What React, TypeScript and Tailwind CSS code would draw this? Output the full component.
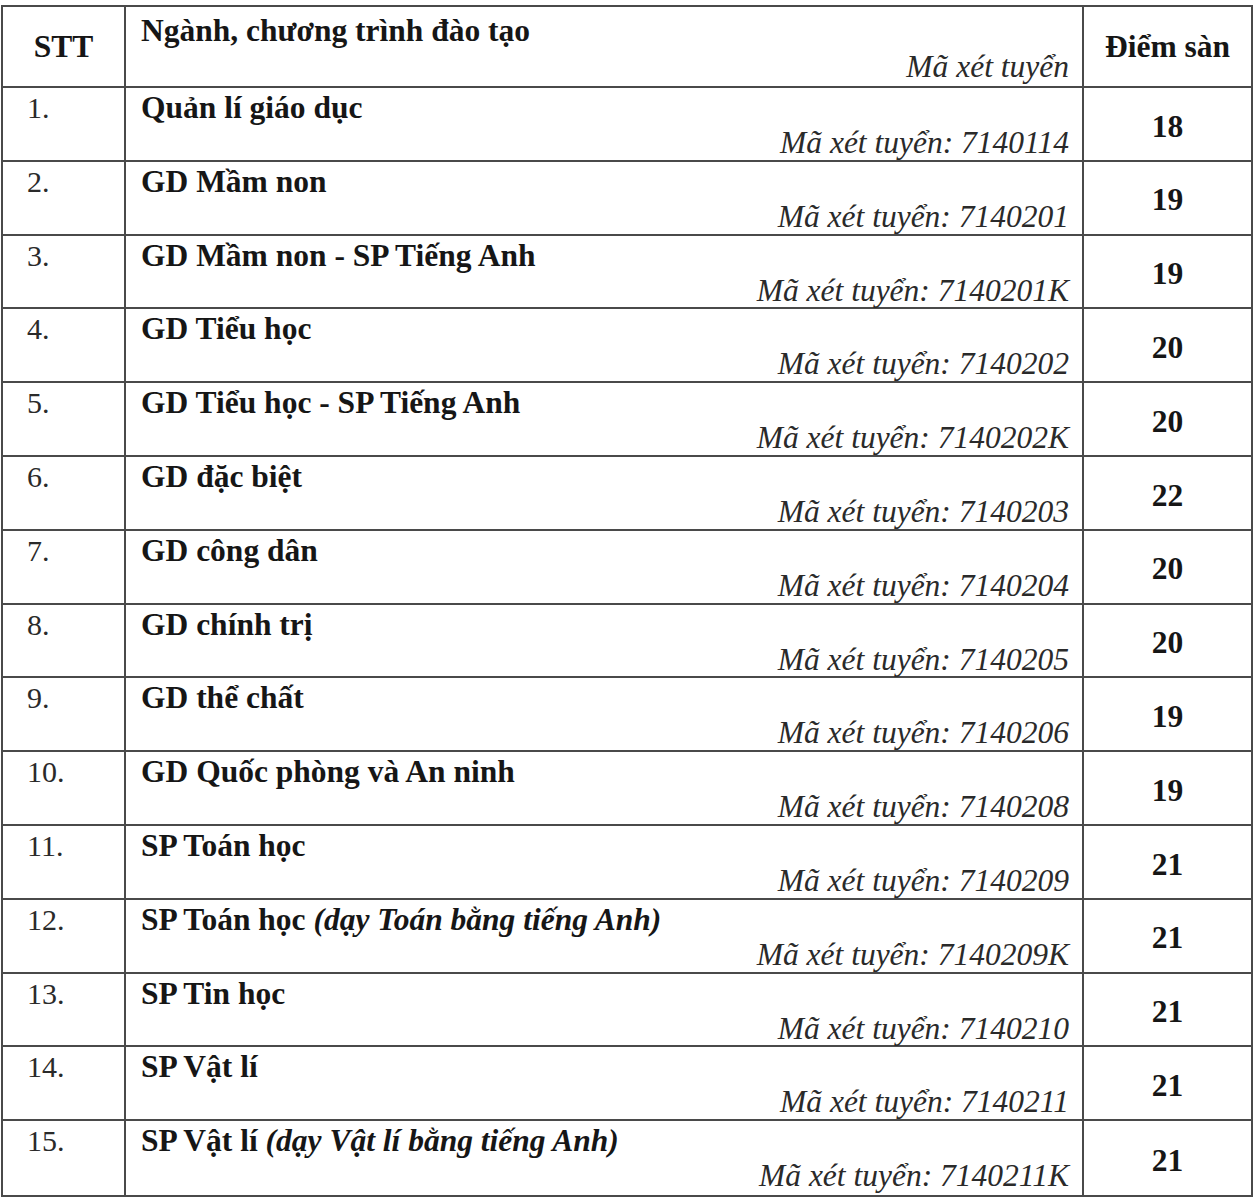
import React from 'react';

type Row = {
  stt: string;
  name: string;
  note?: string;
  code: string;
  score: string;
};

const rows: Row[] = [
  { stt: '1.', name: 'Quản lí giáo dục', code: '7140114', score: '18' },
  { stt: '2.', name: 'GD Mầm non', code: '7140201', score: '19' },
  { stt: '3.', name: 'GD Mầm non - SP Tiếng Anh', code: '7140201K', score: '19' },
  { stt: '4.', name: 'GD Tiểu học', code: '7140202', score: '20' },
  { stt: '5.', name: 'GD Tiểu học - SP Tiếng Anh', code: '7140202K', score: '20' },
  { stt: '6.', name: 'GD đặc biệt', code: '7140203', score: '22' },
  { stt: '7.', name: 'GD công dân', code: '7140204', score: '20' },
  { stt: '8.', name: 'GD chính trị', code: '7140205', score: '20' },
  { stt: '9.', name: 'GD thể chất', code: '7140206', score: '19' },
  { stt: '10.', name: 'GD Quốc phòng và An ninh', code: '7140208', score: '19' },
  { stt: '11.', name: 'SP Toán học', code: '7140209', score: '21' },
  { stt: '12.', name: 'SP Toán học', note: '(dạy Toán bằng tiếng Anh)', code: '7140209K', score: '21' },
  { stt: '13.', name: 'SP Tin học', code: '7140210', score: '21' },
  { stt: '14.', name: 'SP Vật lí', code: '7140211', score: '21' },
  { stt: '15.', name: 'SP Vật lí', note: '(dạy Vật lí bằng tiếng Anh)', code: '7140211K', score: '21' },
];

export default function App() {
  return (
    <div className="bg-white w-[1258px] h-[1200px] pt-[5px] pl-[1px] text-[#161616] font-['Liberation_Serif','Times_New_Roman',serif]">
      <div className="w-[1252px] border-2 border-[#4a4a4a]">
        {/* Header */}
        <div className="grid grid-cols-[123px_958px_1fr] h-[81px] border-b-2 border-[#4a4a4a]">
          <div className="border-r-2 border-[#4a4a4a] flex items-center justify-center">
            <span className="text-[31.5px] font-bold leading-none">STT</span>
          </div>
          <div className="border-r-2 border-[#4a4a4a] flex flex-col pl-[15px] pr-[13px] pt-[8px]">
            <span className="text-[31.5px] font-bold leading-[32px]">Ngành, chương trình đào tạo</span>
            <span className="text-[31.5px] italic leading-[32px] self-end mt-[4px] text-[#2a2a2a]">Mã xét tuyển</span>
          </div>
          <div className="flex items-center justify-center">
            <span className="text-[31.5px] font-bold leading-none">Điểm sàn</span>
          </div>
        </div>

        {rows.map((r, i) => (
          <div
            key={r.stt}
            className={`grid grid-cols-[123px_958px_1fr] h-[73.8px] ${
              i < rows.length - 1 ? 'border-b-2 border-[#4a4a4a]' : ''
            }`}
          >
            <div className="border-r-2 border-[#4a4a4a] pl-[24px] pt-[4px]">
              <span className="text-[30px] leading-[32px] text-[#2a2a2a]">{r.stt}</span>
            </div>
            <div className="border-r-2 border-[#4a4a4a] flex flex-col pl-[15px] pr-[13px] pt-[4px]">
              <span className="text-[31.5px] font-bold leading-[32px] whitespace-nowrap">
                {r.name}
                {r.note && <span className="italic"> {r.note}</span>}
              </span>
              <span className="text-[31.5px] italic leading-[32px] self-end mt-[3px] text-[#2a2a2a] whitespace-nowrap">
                Mã xét tuyển: {r.code}
              </span>
            </div>
            <div className="flex items-center justify-center pt-[5px]">
              <span className="text-[31.5px] font-bold leading-none">{r.score}</span>
            </div>
          </div>
        ))}
      </div>
    </div>
  );
}
